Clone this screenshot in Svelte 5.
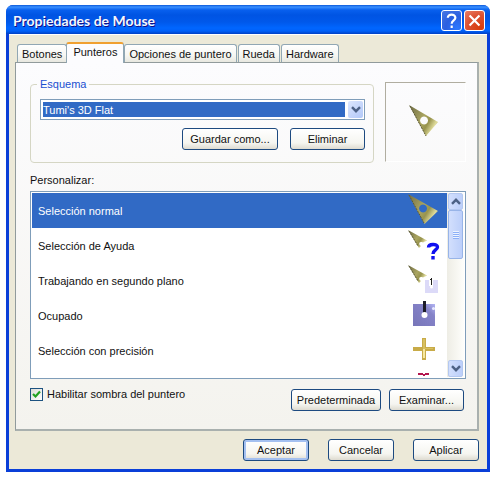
<script lang="ts">
  const tabs = ['Botones', 'Punteros', 'Opciones de puntero', 'Rueda', 'Hardware'];
  const cursors = [
    { name: 'Selección normal', icon: 'arrow' },
    { name: 'Selección de Ayuda', icon: 'help' },
    { name: 'Trabajando en segundo plano', icon: 'working' },
    { name: 'Ocupado', icon: 'busy' },
    { name: 'Selección con precisión', icon: 'cross' }
  ];

  let activeTab = $state('Punteros');
  let selected = $state(0);
  let shadow = $state(true);
</script>

<svelte:head>
  <title>Propiedades de Mouse</title>
</svelte:head>

{#snippet chevron()}
  <svg class="chevron" viewBox="0 0 10 7" aria-hidden="true">
    <path d="M1 1.2 5 5.2 9 1.2" />
  </svg>
{/snippet}

<svg class="defs" aria-hidden="true">
  <defs>
    <linearGradient id="gold" x1="0" y1="0.2" x2="1" y2="0.8">
      <stop offset="0" stop-color="#77744a" />
      <stop offset="0.45" stop-color="#aaa560" />
      <stop offset="0.65" stop-color="#98944e" />
      <stop offset="0.85" stop-color="#e0dc9c" />
      <stop offset="1" stop-color="#96924e" />
    </linearGradient>
    <linearGradient id="violet" x1="0" y1="1" x2="1" y2="0">
      <stop offset="0" stop-color="#7775b8" />
      <stop offset="0.7" stop-color="#8583c8" />
      <stop offset="1" stop-color="#b4b6f4" />
    </linearGradient>
  </defs>
</svg>

<div class="window">
  <header class="titlebar">
    <h1>Propiedades de Mouse</h1>
    <button class="caption help" aria-label="Ayuda">
      <svg viewBox="0 0 21 21" aria-hidden="true">
        <path d="M6.400 7.500C6.400 2.900 14.800 2.900 14.800 7.500C14.800 10.500 10.700 10.300 10.700 14" />
        <path d="M10.700 16v2.800" />
      </svg>
    </button>
    <button class="caption close" aria-label="Cerrar">
      <svg viewBox="0 0 21 21" aria-hidden="true">
        <path d="M5 5 16 16M16 5 5 16" />
      </svg>
    </button>
  </header>

  <main class="body">
    <div class="tabs" role="tablist">
      {#each tabs as tab}
        <button
          class="tab"
          class:active={tab === activeTab}
          role="tab"
          aria-selected={tab === activeTab}
          onclick={() => (activeTab = tab)}>{tab}</button>
      {/each}
    </div>

    <div class="panel" role="tabpanel">
      <div class="top">
        <fieldset>
          <legend>Esquema</legend>
          <div class="combo">
            <select aria-label="Esquema">
              <option>Tumi's 3D Flat</option>
            </select>
            <span class="drop">{@render chevron()}</span>
          </div>
          <div class="scheme-buttons">
            <button class="btn save">Guardar como...</button>
            <button class="btn delete">Eliminar</button>
          </div>
        </fieldset>

        <div class="preview">
          <svg viewBox="0 0 30 32" aria-hidden="true">
            <path
              fill="url(#gold)"
              fill-rule="evenodd"
              d="M0 0 29 17 17 31ZM15 11.500a4 4 0 1 0 .1 0Z"
            />
            <path class="edge" d="M1 1 17 31" />
          </svg>
        </div>
      </div>

      <div class="list-label" id="list-label">Personalizar:</div>

      <div class="list">
        <div class="rows" role="listbox" aria-labelledby="list-label">
          {#each cursors as cursor, i}
            <button
              class="row"
              class:selected={i === selected}
              role="option"
              aria-selected={i === selected}
              onclick={() => (selected = i)}
            >
              <span>{cursor.name}</span>
              <svg class="cursor" viewBox="0 0 34 35" aria-hidden="true">
                {#if cursor.icon === 'arrow'}
                  <path
                    fill="url(#gold)"
                    fill-rule="evenodd"
                    d="M2 1 32 18 18.500 31ZM17 11.500a4 4 0 1 0 .1 0Z"
                  />
                  <path class="edge" d="M3 2 18 30" />
                {:else if cursor.icon === 'help'}
                  <path fill="url(#gold)" d="M2 2 21 12.500 17 14.500C12.500 12.500 12.500 17 15 18L13 20Z" />
                  <path class="edge" d="M3 3 12 18" />
                  <path class="question" d="M22.500 19.500C22.500 15.500 31.500 15.500 31.500 19C31.500 22 27 22 27 26" />
                  <path class="question" d="M27 28v3.500" />
                {:else if cursor.icon === 'working'}
                  <path fill="url(#gold)" d="M2 2 21 12.500 17 14.500C12.500 12.500 12.500 17 15 18L13 20Z" />
                  <path class="edge" d="M3 3 12 18" />
                  <path fill="#dcdaf8" d="M19 17h13v13H19z" />
                  <path fill="#fff" d="M23 16h4v7h-4z" />
                  <path fill="#222" d="M25 15h1v7h-1zM24 16h1v1h-1z" />
                  <circle cx="25.500" cy="24" r="1.500" fill="#fff" />
                {:else if cursor.icon === 'busy'}
                  <path fill="url(#violet)" d="M7 6h22v22H7z" />
                  <path fill="#1c1c28" d="M17 3h3v12h-3z" />
                  <circle cx="18.500" cy="17" r="3" fill="#fff" />
                  <circle cx="27.500" cy="10.500" r="1.500" fill="#e8eaff" />
                {:else}
                  <path fill="#c8ab48" d="M16 5h4v9h9v4h-9v9h-4v-9H7v-4h9z" />
                  <path fill="#d8c060" d="M17 6h2v9h8v1h-10z" />
                  <path fill="#f6e8a0" d="M17 16h2v9h-2z" />
                {/if}
              </svg>
            </button>
          {/each}
          <div class="row">
            <svg class="cursor" viewBox="0 0 34 35" aria-hidden="true">
              <path fill="#b3164e" d="M12 5h5v1h2v-1h4v2h-4v1h-2v-1h-5z" />
            </svg>
          </div>
        </div>
        <div class="scrollbar">
          <button class="arrow up" aria-label="Subir">{@render chevron()}</button>
          <div class="thumb">
            <i></i><i></i><i></i><i></i>
          </div>
          <button class="arrow down" aria-label="Bajar">{@render chevron()}</button>
        </div>
      </div>

      <div class="options">
        <label>
          <span class="check">
            <input type="checkbox" bind:checked={shadow} />
            {#if shadow}
              <svg viewBox="0 0 13 13" aria-hidden="true">
                <path d="M3 6 5.500 8.500 10 3.500" />
              </svg>
            {/if}
          </span>
          Habilitar sombra del puntero
        </label>
        <div class="option-buttons">
          <button class="btn default-cursor">Predeterminada</button>
          <button class="btn browse">Examinar...</button>
        </div>
      </div>
    </div>

    <footer>
      <button class="btn primary">Aceptar</button>
      <button class="btn">Cancelar</button>
      <button class="btn">Aplicar</button>
    </footer>
  </main>
</div>

<style>
  :global(body) {
    background: #fff;
  }

  .window,
  button,
  select {
    font-family: 'Liberation Sans', Arial, sans-serif;
    font-size: 11px;
    line-height: 14px;
    color: #111;
  }

  .window {
    margin: 5px 8px 8px 6px;
    border-radius: 7px 7px 0 0;
    background: #0a3fd8;
    overflow: hidden;
  }

  button {
    box-sizing: border-box;
    margin: 0;
    padding: 0;
    white-space: nowrap;
  }

  .defs {
    position: absolute;
    width: 0;
    height: 0;
  }

  .titlebar {
    display: flex;
    align-items: center;
    gap: 2px;
    height: 29px;
    padding: 0 5px 0 7px;
    background: linear-gradient(
      #0a58d8 0,
      #3a90ff 2px,
      #0860ee 5px,
      #0054e3 10px,
      #0058ea 17px,
      #0066ff 23px,
      #0060f8 26px,
      #0040c4 29px
    );
  }

  h1 {
    flex: 1;
    margin: 0;
    padding-top: 3px;
    font-family: Lato, sans-serif;
    font-size: 14px;
    line-height: 18px;
    font-weight: 700;
    color: #f4f7ff;
    text-shadow: 1px 1px #0f1089;
  }

  .caption {
    width: 21px;
    height: 21px;
    border: 1px solid #fff;
    border-radius: 3px;
    margin-top: 2px;
  }

  .caption svg {
    display: block;
    width: 19px;
    height: 19px;
    fill: none;
    stroke: #fff;
    stroke-width: 2.4;
  }

  .help {
    background: radial-gradient(circle at 80% 90%, #2b78ff, #2a5fe0 50%, #4a78e4 100%);
  }

  .close {
    background: radial-gradient(circle at 80% 90%, #d83c0c, #dc5030 55%, #e88068 100%);
  }

  .body {
    margin: 0 3px 3px;
    padding: 8px 8px 8px 6px;
    border-top: 1px solid #fff;
    background: #ece9d8;
  }

  .tabs {
    display: flex;
    align-items: flex-end;
    padding-left: 2px;
    height: 19px;
  }

  .tab {
    height: 18px;
    padding: 0 4px;
    border: 1px solid #91a7b4;
    border-bottom: 0;
    border-radius: 3px 3px 0 0;
    background: linear-gradient(#fff, #f6f6f2 60%, #e8e8e0);
  }

  .tab + .tab {
    margin-left: 1px;
  }

  .tab.active {
    position: relative;
    height: 21px;
    margin: 0 -1px -1px -1px;
    padding: 0 6px 3px;
    border-top: 2px solid #f0a030;
    background: #fcfcfe;
  }

  .panel {
    padding: 14px 11px 18px 14px;
    border: 1px solid #919b9c;
    border-right-width: 2px;
    border-bottom-width: 2px;
    border-color: #919b9c #a9b0ae #a9b0ae #919b9c;
    background: linear-gradient(#fcfcfe, #f4f3ee);
  }

  .top {
    display: flex;
    gap: 11px;
  }

  fieldset {
    flex: 1;
    min-width: 0;
    margin: 0;
    padding: 8px 8px 12px 9px;
    border: 1px solid #d5d6c4;
    border-radius: 4px;
  }

  legend {
    padding: 0 3px;
    margin-left: -3px;
    color: #1a4fd0;
  }

  .combo {
    position: relative;
  }

  select {
    display: block;
    box-sizing: border-box;
    width: 100%;
    height: 21px;
    padding: 2px 19px 2px 2px;
    border: 1px solid #7f9db9;
    border-radius: 0;
    appearance: none;
    color: #fff;
    background: linear-gradient(#316ac5, #316ac5) content-box, #fff;
  }

  option {
    color: #111;
  }

  .drop {
    position: absolute;
    top: 2px;
    right: 2px;
    display: flex;
    align-items: center;
    justify-content: center;
    width: 15px;
    height: 17px;
    border-radius: 2px;
    background: linear-gradient(135deg, #dce6fe, #b2c8f8);
    pointer-events: none;
  }

  .chevron {
    width: 10px;
    height: 7px;
    fill: none;
    stroke: #4d6185;
    stroke-width: 2.4;
  }

  .scheme-buttons,
  .option-buttons {
    display: flex;
    justify-content: flex-end;
  }

  .scheme-buttons {
    gap: 12px;
    margin-top: 8px;
  }

  .option-buttons {
    gap: 8px;
  }

  .btn {
    min-width: 66px;
    height: 22px;
    border: 1px solid #1d4a80;
    border-radius: 3px;
    background: linear-gradient(#fff, #f5f5f0 70%, #dedbd0);
  }

  .save {
    width: 96px;
  }

  .delete,
  .browse {
    width: 75px;
  }

  .default-cursor {
    width: 90px;
  }

  .primary {
    box-shadow: inset 0 0 0 2px #a4c0f0;
  }

  .preview {
    display: flex;
    align-items: center;
    justify-content: center;
    box-sizing: border-box;
    width: 81px;
    margin: 5px 0 1px;
    padding: 0 4px 2px 0;
    border: 1px solid;
    border-color: #b0ada0 #fff #fff #b0ada0;
  }

  .preview svg {
    width: 30px;
    height: 32px;
  }

  .edge {
    fill: none;
    stroke: #5c5a38;
    stroke-width: 1;
    stroke-dasharray: 2 1;
  }

  .list-label {
    margin: 10px 0 4px;
  }

  .list {
    display: flex;
    height: 184px;
    padding: 1px;
    border: 1px solid #7f9db9;
    background: #fff;
  }

  .rows {
    flex: 1;
    overflow: hidden;
  }

  .row {
    display: flex;
    align-items: center;
    justify-content: space-between;
    width: 100%;
    height: 35px;
    padding: 0 7px 0 6px;
    border: 0;
    background: #fff;
    text-align: left;
  }

  div.row {
    box-sizing: border-box;
    justify-content: flex-end;
  }

  .row.selected {
    background: #316ac5;
    color: #fff;
  }

  .cursor {
    width: 34px;
    height: 35px;
  }

  .question {
    fill: none;
    stroke: #1010f0;
    stroke-width: 3.4;
  }

  .scrollbar {
    display: flex;
    flex-direction: column;
    width: 17px;
    background: linear-gradient(90deg, #eeede5, #fefefb);
  }

  .arrow,
  .thumb {
    display: flex;
    align-items: center;
    justify-content: center;
    margin: 0 1px;
    border: 1px solid #b4c8f0;
    border-radius: 2px;
    background: linear-gradient(90deg, #d2dffd, #bccffa);
  }

  .arrow {
    height: 17px;
  }

  .up .chevron {
    transform: rotate(180deg);
  }

  .down {
    margin-top: auto;
  }

  .thumb {
    flex-direction: column;
    gap: 1px;
    height: 47px;
    border-color: #98b4e8;
  }

  .thumb i {
    width: 6px;
    height: 1px;
    background: #eef4fe;
    box-shadow: 0 1px #8cb0f8;
  }

  .options {
    display: flex;
    align-items: flex-start;
    justify-content: space-between;
    padding: 8px 2px 0 0;
  }

  label {
    display: flex;
    align-items: center;
    gap: 4px;
  }

  .option-buttons {
    margin-top: 2px;
  }

  .check {
    position: relative;
    height: 13px;
  }

  .check input {
    display: block;
    box-sizing: border-box;
    width: 13px;
    height: 13px;
    margin: 0;
    border: 1px solid #1d5280;
    appearance: none;
    background: linear-gradient(135deg, #dcdcd7, #fff);
  }

  .check svg {
    position: absolute;
    top: 0;
    left: 0;
    width: 13px;
    height: 13px;
    fill: none;
    stroke: #21a121;
    stroke-width: 2.2;
    pointer-events: none;
  }

  footer {
    display: flex;
    justify-content: flex-end;
    gap: 19px;
    padding-top: 8px;
  }
</style>
